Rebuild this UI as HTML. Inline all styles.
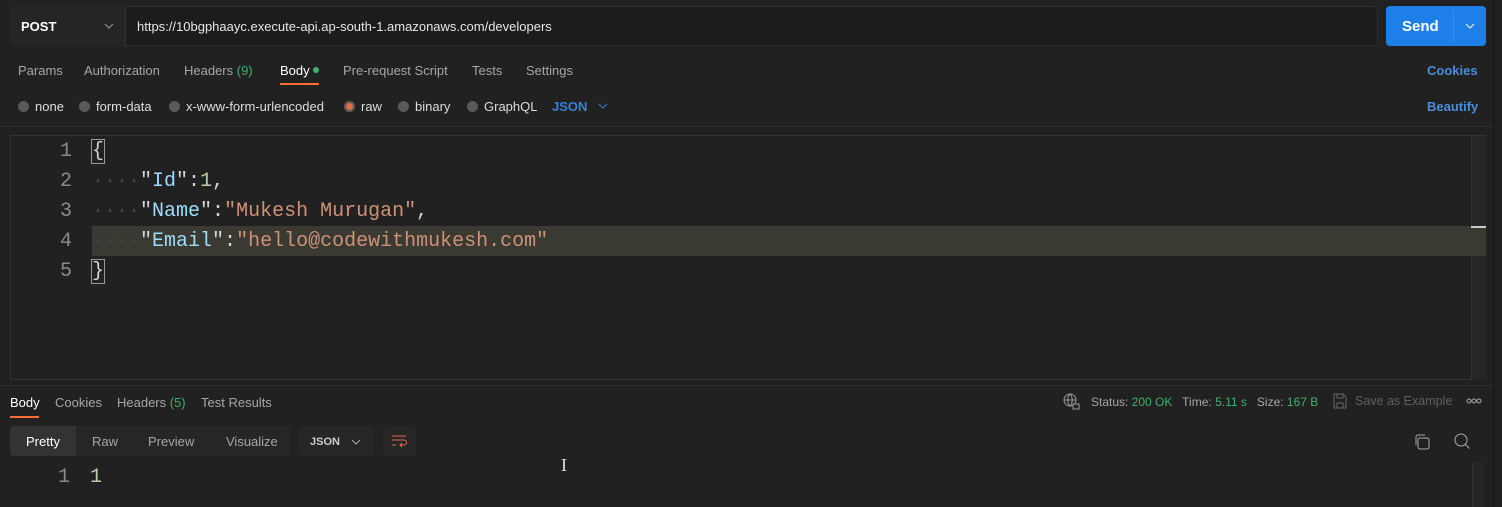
<!DOCTYPE html>
<html><head><style>
*{margin:0;padding:0;box-sizing:border-box}
body{width:1502px;height:507px;background:#212121;font-family:"Liberation Sans",sans-serif;color:#a6a6a6;position:relative;overflow:hidden}
.a{position:absolute;white-space:nowrap}
.mono{font-family:"Liberation Mono",monospace;font-size:20px}
.tab{font-size:13px;color:#a6a6a6}
.dot{display:inline-block;width:11px;height:11px;border-radius:50%;background:#5a5a5a;vertical-align:-1px;margin-right:6px}
</style></head><body>
<div class="a" style="left:10px;top:6px;width:1368px;height:40px;border:1px solid #2e2e2e;background:#1c1c1c;border-radius:4px"></div>
<div class="a" style="left:10px;top:6px;width:116px;height:40px;background:#252525;border-right:1px solid #333;border-radius:4px 0 0 4px"></div>
<div class="a" style="left:21px;top:19px;font-size:13px;font-weight:bold;color:#fff">POST</div>
<svg class="a" style="left:104px;top:22px" width="10" height="8"><path d="M1 2l4 4 4-4" stroke="#999" fill="none"/></svg>
<div class="a" style="left:137px;top:19px;font-size:13px;color:#e6e6e6">https://10bgphaayc.execute-api.ap-south-1.amazonaws.com/developers</div>
<div class="a" style="left:1386px;top:6px;width:100px;height:40px;background:#1e7fe8;border-radius:4px"></div>
<div class="a" style="left:1453px;top:10px;width:1px;height:32px;background:#3a8fed"></div>
<div class="a" style="left:1402px;top:18px;font-size:15px;font-weight:bold;color:#fff">Send</div>
<svg class="a" style="left:1465px;top:22px" width="10" height="8"><path d="M1 2l4 4 4-4" stroke="#fff" fill="none"/></svg>
<div class="a" style="left:1493px;top:0;width:2px;height:507px;background:#1a1a1a"></div>

<div class="a tab" style="left:18px;top:63px">Params</div>
<div class="a tab" style="left:84px;top:63px">Authorization</div>
<div class="a tab" style="left:184px;top:63px">Headers <span style="color:#3fb26b">(9)</span></div>
<div class="a tab" style="left:280px;top:63px;color:#fff">Body <span style="display:inline-block;width:6px;height:6px;border-radius:50%;background:#3fb26b;vertical-align:2px"></span></div>
<div class="a" style="left:280px;top:83px;width:39px;height:2px;background:#ff6c37"></div>
<div class="a tab" style="left:343px;top:63px">Pre-request Script</div>
<div class="a tab" style="left:472px;top:63px">Tests</div>
<div class="a tab" style="left:526px;top:63px">Settings</div>
<div class="a" style="left:1427px;top:63px;font-size:13px;font-weight:bold;color:#4a8ddc">Cookies</div>

<div class="a tab" style="left:18px;top:99px;color:#ddd"><span class="dot"></span>none</div>
<div class="a tab" style="left:79px;top:99px;color:#ddd"><span class="dot"></span>form-data</div>
<div class="a tab" style="left:169px;top:99px;color:#ddd"><span class="dot"></span>x-www-form-urlencoded</div>
<div class="a tab" style="left:344px;top:99px;color:#ddd"><span class="dot" style="background:#e06c4a;box-shadow:0 0 0 2px #5a5a5a inset"></span>raw</div>
<div class="a tab" style="left:398px;top:99px;color:#ddd"><span class="dot"></span>binary</div>
<div class="a tab" style="left:467px;top:99px;color:#ddd"><span class="dot"></span>GraphQL</div>
<div class="a" style="left:552px;top:99px;font-size:13px;font-weight:bold;color:#3a7fd8">JSON</div>
<svg class="a" style="left:598px;top:102px" width="10" height="8"><path d="M1 2l4 4 4-4" stroke="#3a7fd8" fill="none"/></svg>
<div class="a" style="left:1427px;top:99px;font-size:13px;font-weight:bold;color:#4a8ddc">Beautify</div>
<div class="a" style="left:0;top:126px;width:1493px;height:1px;background:#2e2e2e"></div>

<div class="a" style="left:10px;top:135px;width:1476px;height:245px;border:1px solid #333;border-right:none;background:#212121"></div>
<div class="a" style="left:1471px;top:136px;width:15px;height:244px;background:#262626;border-left:1px solid #333"></div>
<div class="a" style="left:92px;top:226px;width:1394px;height:30px;background:#3a3a32"></div>
<div class="a" style="left:1471px;top:226px;width:15px;height:2px;background:#ccc"></div>
<div class="a mono" style="left:0;top:137px;width:72px;text-align:right;line-height:30px;color:#8a8a8a">1<br>2<br>3<br>4<br>5</div>
<div class="a mono" style="left:92px;top:137px;line-height:30px;color:#d4d4d4"><span style="outline:1px solid #999">{</span><br><span style="color:#444">····</span>"<span style="color:#9cdcfe">Id</span>":<span style="color:#b5cea8">1</span>,<br><span style="color:#444">····</span>"<span style="color:#9cdcfe">Name</span>":<span style="color:#ce9178">"Mukesh Murugan"</span>,<br><span style="color:#444">····</span>"<span style="color:#9cdcfe">Email</span>":<span style="color:#ce9178">"hello@codewithmukesh.com"</span><br><span style="outline:1px solid #999">}</span></div>

<div class="a" style="left:0;top:385px;width:1493px;height:1px;background:#2e2e2e"></div>
<div class="a tab" style="left:10px;top:395px;color:#fff">Body</div>
<div class="a" style="left:10px;top:416px;width:29px;height:2px;background:#ff6c37"></div>
<div class="a tab" style="left:55px;top:395px">Cookies</div>
<div class="a tab" style="left:117px;top:395px">Headers <span style="color:#3fb26b">(5)</span></div>
<div class="a tab" style="left:201px;top:395px">Test Results</div>
<svg class="a" style="left:1063px;top:393px" width="17" height="17"><circle cx="7" cy="7" r="6" stroke="#999" fill="none"/><path d="M1 7h12M7 1c-3 3-3 9 0 12M7 1c3 3 3 9 0 12" stroke="#999" fill="none"/><rect x="10" y="11" width="6" height="5" fill="#212121" stroke="#999"/></svg>
<div class="a" style="left:1091px;top:395px;font-size:12px">Status: <span style="color:#3fb26b">200 OK</span>&nbsp;&nbsp; Time: <span style="color:#3fb26b">5.11 s</span>&nbsp;&nbsp; Size: <span style="color:#3fb26b">167 B</span></div>
<svg class="a" style="left:1333px;top:393px" width="14" height="16"><path d="M1 1h9l3 3v11H1z M4 1v4h6V1 M4 15v-5h6v5" stroke="#666" fill="none"/></svg>
<div class="a" style="left:1355px;top:394px;font-size:12.5px;color:#5f5f5f">Save as Example</div>
<svg class="a" style="left:1466px;top:398px" width="16" height="6"><circle cx="3" cy="3" r="2" stroke="#aaa" fill="none"/><circle cx="8" cy="3" r="2" stroke="#aaa" fill="none"/><circle cx="13" cy="3" r="2" stroke="#aaa" fill="none"/></svg>

<div class="a" style="left:10px;top:426px;width:281px;height:30px;background:#262626;border-radius:4px"></div>
<div class="a" style="left:10px;top:426px;width:66px;height:30px;background:#333;border-radius:4px 0 0 4px"></div>
<div class="a tab" style="left:26px;top:434px;color:#fff">Pretty</div>
<div class="a tab" style="left:92px;top:434px">Raw</div>
<div class="a tab" style="left:148px;top:434px">Preview</div>
<div class="a tab" style="left:226px;top:434px">Visualize</div>
<div class="a" style="left:299px;top:426px;width:76px;height:30px;background:#262626;border-radius:4px"></div>
<div class="a" style="left:310px;top:436px;font-size:11px;font-weight:bold;color:#ccc">JSON</div>
<svg class="a" style="left:351px;top:438px" width="10" height="8"><path d="M1 2l4 4 4-4" stroke="#aaa" fill="none"/></svg>
<div class="a" style="left:383px;top:426px;width:33px;height:30px;background:#262626;border-radius:4px"></div>
<svg class="a" style="left:391px;top:433px" width="16" height="16"><path d="M1 3h14M1 7h12a2 2 0 010 5h-4M11 10l-2 2 2 2M1 12h4" stroke="#e06c4a" fill="none"/></svg>
<svg class="a" style="left:1413px;top:433px" width="18" height="18"><rect x="5" y="5" width="11" height="11" rx="2" stroke="#aaa" fill="none"/><path d="M3 12V4a2 2 0 012-2h7" stroke="#aaa" fill="none"/></svg>
<svg class="a" style="left:1453px;top:432px" width="18" height="18"><circle cx="8" cy="8" r="6" stroke="#aaa" fill="none"/><path d="M12.5 12.5l4 4" stroke="#aaa"/></svg>
<div class="a" style="left:1472px;top:462px;width:12px;height:45px;background:#262626;border-left:1px solid #333"></div>
<div class="a mono" style="left:0;top:463px;width:70px;text-align:right;line-height:30px;color:#8a8a8a">1</div>
<div class="a mono" style="left:90px;top:463px;line-height:30px;color:#b5cea8">1</div>
<div class="a" style="left:561px;top:455px;font-size:18px;color:#ddd;font-family:'Liberation Serif',serif">I</div>
</body></html>
